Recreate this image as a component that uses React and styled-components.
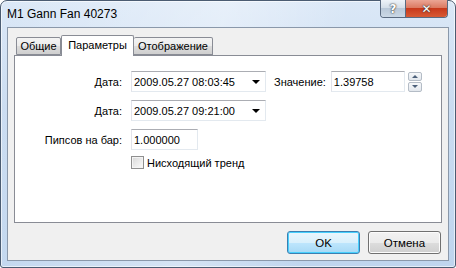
import React from 'react';
import styled, { createGlobalStyle } from 'styled-components';

const GlobalStyle = createGlobalStyle`
  html, body {
    margin: 0;
    padding: 0;
    background: #ffffff;
  }
  body {
    width: 456px;
    height: 268px;
    overflow: hidden;
    font-family: "Liberation Sans", Arial, sans-serif;
    font-size: 11px;
    color: #000;
  }
  * { box-sizing: border-box; }
`;

const Window = styled.div`
  width: 456px;
  height: 268px;
  display: flex;
  flex-direction: column;
  padding: 0 6px 6px 6px;
  border: 1px solid #4b5c72;
  border-radius: 7px 7px 3px 3px;
  background:
    linear-gradient(100deg, rgba(255, 255, 255, 0) 0%, rgba(255, 255, 255, 0.35) 45%, rgba(255, 255, 255, 0) 70%),
    linear-gradient(180deg, #dbe8f7 0%, #cadcf1 40%, #bfd5ee 100%);
  box-shadow: inset 0 0 0 1px rgba(255, 255, 255, 0.6);
`;

const TitleBar = styled.div`
  height: 26px;
  display: flex;
  align-items: center;
  justify-content: space-between;
`;

const Title = styled.span`
  font-size: 12px;
  color: #000;
`;

const CaptionButtons = styled.div`
  align-self: flex-start;
  display: flex;
  margin-top: -1px;
  margin-right: 1px;
  border: 1px solid #5a6a80;
  border-top: none;
  border-radius: 0 0 4px 4px;
  overflow: hidden;
  height: 18px;
`;

const CaptionButton = styled.div`
  width: ${p => p.wide ? '42px' : '24px'};
  height: 17px;
  display: flex;
  align-items: center;
  justify-content: center;
  font-family: "DejaVu Sans", sans-serif;
  font-weight: bold;
  font-size: 12px;
  color: #fff;
  text-shadow: 0 0 2px #3a3a3a, 0 0 1px #222;
  border-left: ${p => p.wide ? '1px solid #5a6a80' : 'none'};
  background: ${p => p.wide
    ? 'linear-gradient(180deg, #eba595 0%, #dc7a62 45%, #c8391c 50%, #d85a34 100%)'
    : 'linear-gradient(180deg, #eef3f8 0%, #d5dfe9 45%, #b9c8d8 50%, #cbd8e6 100%)'};
`;

const Client = styled.div`
  flex: 1;
  display: flex;
  flex-direction: column;
  padding: 7px 6px 6px 6px;
  border: 1px solid #8a98aa;
  background: #f0f0f0;
`;

const TabStrip = styled.div`
  height: 20px;
  display: flex;
  align-items: flex-end;
  padding-left: 2px;
`;

const Tab = styled.div`
  position: relative;
  width: ${p => p.width}px;
  height: ${p => p.active ? '21px' : '18px'};
  margin-bottom: ${p => p.active ? '-1px' : '0'};
  z-index: ${p => p.active ? 2 : 1};
  padding-top: ${p => p.active ? '3px' : '2px'};
  text-align: center;
  border: 1px solid #898c95;
  border-bottom: ${p => p.active ? 'none' : '1px solid #898c95'};
  border-left: ${p => p.noLeft ? 'none' : '1px solid #898c95'};
  border-radius: 2px 2px 0 0;
  background: ${p => p.active
    ? '#ffffff'
    : 'linear-gradient(180deg, #f4f4f4 0%, #ebebeb 50%, #dddddd 51%, #cfcfcf 100%)'};
  white-space: nowrap;
  font-size: 11px;
`;

const Panel = styled.div`
  flex: 1;
  border: 1px solid #898c95;
  background: #fff;
  padding-top: 15px;
`;

const Form = styled.div`
  display: grid;
  grid-template-columns: 107px auto;
  column-gap: 9px;
  row-gap: 8px;
  align-items: center;
`;

const Label = styled.div`
  text-align: right;
  white-space: nowrap;
`;

const Line = styled.div`
  display: flex;
  align-items: center;
  height: ${p => p.short ? '13px' : '21px'};
  margin-top: ${p => p.short ? '-2px' : '0'};
`;

const Field = styled.div`
  width: ${p => p.width}px;
  height: 21px;
  display: flex;
  align-items: center;
  justify-content: space-between;
  padding: 0 5px 0 2px;
  border: 1px solid #dbdfe6;
  border-top-color: #abadb3;
  border-left-color: #e2e3ea;
  border-right-color: #e3e9ef;
  border-bottom-color: #e3e9ef;
  background: #fff;
  white-space: nowrap;
`;

const Arrow = styled.span`
  width: 0;
  height: 0;
  border-left: 4px solid transparent;
  border-right: 4px solid transparent;
  border-top: 4px solid #000;
  margin-top: 1px;
`;

const InlineLabel = styled.span`
  margin-left: 8px;
  margin-right: 5px;
`;

const Spinner = styled.div`
  margin-left: 3px;
  width: 14px;
  height: 20px;
  display: flex;
  flex-direction: column;
  gap: 1px;
`;

const SpinButton = styled.div`
  flex: 1;
  display: flex;
  align-items: center;
  justify-content: center;
  border: 1px solid #b4bcc6;
  border-radius: 2px;
  background: linear-gradient(180deg, #f6f8fa 0%, #e2e7ed 100%);
`;

const SpinArrow = styled.span`
  width: 0;
  height: 0;
  border-left: 3px solid transparent;
  border-right: 3px solid transparent;
  ${p => p.up
    ? 'border-bottom: 3px solid #4c607a;'
    : 'border-top: 3px solid #4c607a;'}
`;

const CheckBox = styled.span`
  width: 13px;
  height: 13px;
  border: 1px solid #8f8f8f;
  background: linear-gradient(135deg, #d6d6d6 0%, #eaeaea 50%, #fbfbfb 100%);
  box-shadow: inset 0 0 0 1px #f4f4f4;
  margin-right: 3px;
`;

const ButtonRow = styled.div`
  display: flex;
  justify-content: flex-end;
  gap: 8px;
  margin-top: 8px;
  padding-right: 1px;
`;

const Button = styled.div`
  width: 73px;
  height: 23px;
  display: flex;
  align-items: center;
  justify-content: center;
  border-radius: 3px;
  border: 1px solid ${p => p.primary ? '#3c7fb1' : '#707070'};
  box-shadow: inset 0 0 0 1px ${p => p.primary ? '#48d0fd' : '#fcfcfc'};
  background: ${p => p.primary
    ? 'linear-gradient(180deg, #eaf6fd 0%, #d9f0fc 50%, #bee6fd 51%, #a7d9f5 100%)'
    : 'linear-gradient(180deg, #f2f2f2 0%, #ebebeb 50%, #dddddd 51%, #cfcfcf 100%)'};
  font-size: 11.5px;
`;

export default function App() {
  return (
    <>
      <GlobalStyle />
      <Window>
        <TitleBar>
          <Title>M1 Gann Fan 40273</Title>
          <CaptionButtons>
            <CaptionButton>?</CaptionButton>
            <CaptionButton wide>✕</CaptionButton>
          </CaptionButtons>
        </TitleBar>
        <Client>
          <TabStrip>
            <Tab width={45}>Общие</Tab>
            <Tab active width={73}>Параметры</Tab>
            <Tab noLeft width={79}>Отображение</Tab>
          </TabStrip>
          <Panel>
            <Form>
              <Label>Дата:</Label>
              <Line>
                <Field width={135}>
                  2009.05.27 08:03:45
                  <Arrow />
                </Field>
                <InlineLabel>Значение:</InlineLabel>
                <Field width={74}>1.39758</Field>
                <Spinner>
                  <SpinButton><SpinArrow up /></SpinButton>
                  <SpinButton><SpinArrow /></SpinButton>
                </Spinner>
              </Line>
              <Label>Дата:</Label>
              <Line>
                <Field width={135}>
                  2009.05.27 09:21:00
                  <Arrow />
                </Field>
              </Line>
              <Label>Пипсов на бар:</Label>
              <Line>
                <Field width={67}>1.000000</Field>
              </Line>
              <div />
              <Line short>
                <CheckBox />
                Нисходящий тренд
              </Line>
            </Form>
          </Panel>
          <ButtonRow>
            <Button primary>OK</Button>
            <Button>Отмена</Button>
          </ButtonRow>
        </Client>
      </Window>
    </>
  );
}
